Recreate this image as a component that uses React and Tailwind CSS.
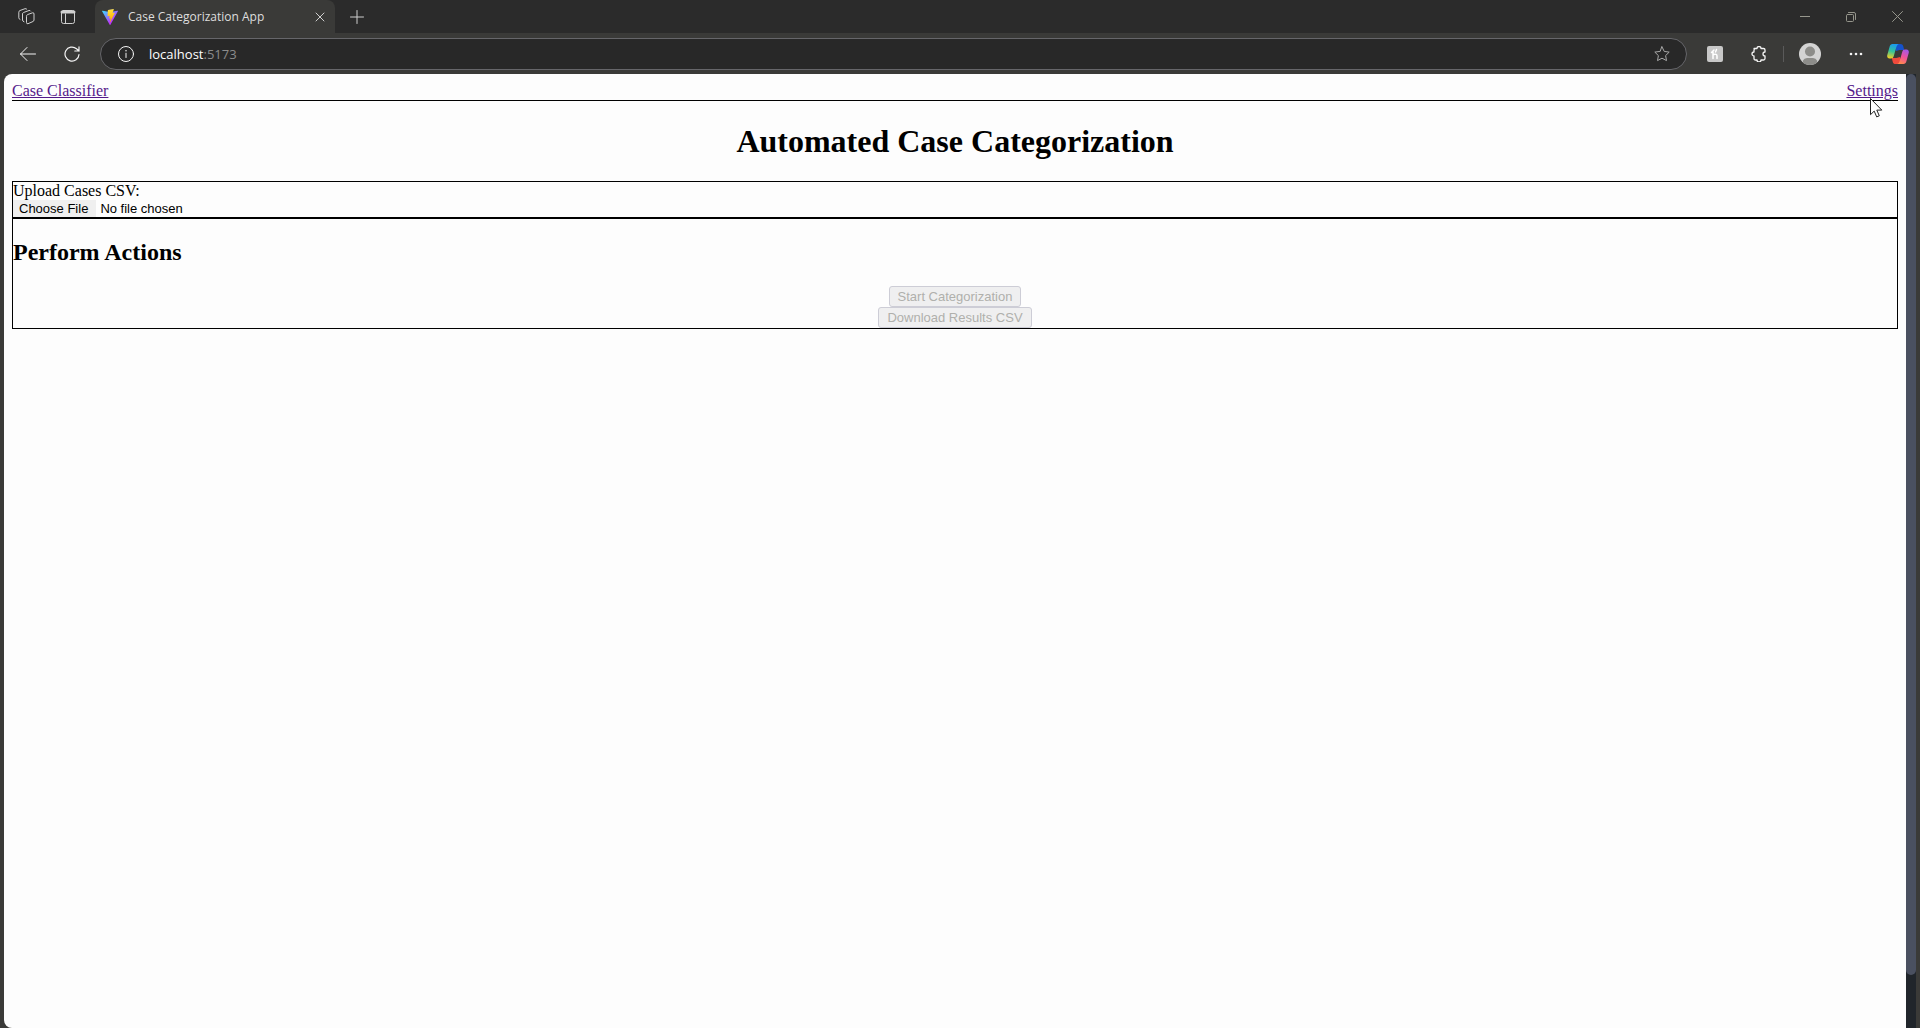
const Icon = ({ size, children, className = "", width = 1 }) => (
  <svg
    width={size}
    height={size}
    viewBox={`0 0 ${size} ${size}`}
    fill="none"
    stroke="currentColor"
    strokeWidth={width}
    strokeLinecap="round"
    strokeLinejoin="round"
    className={`block shrink-0 ${className}`}
    aria-hidden="true"
  >
    {children}
  </svg>
);

function ViteLogo() {
  return (
    <svg width="16" height="16" viewBox="0 0 256 257" className="block shrink-0" aria-hidden="true">
      <defs>
        <linearGradient id="vite-body" x1="0" x2="0.58" y1="0.1" y2="0.79">
          <stop offset="0" stopColor="#41d1ff" />
          <stop offset="1" stopColor="#bd34fe" />
        </linearGradient>
        <linearGradient id="vite-bolt" x1="0.43" x2="0.5" y1="0.02" y2="0.9">
          <stop offset="0" stopColor="#ffea83" />
          <stop offset="0.08" stopColor="#ffdd35" />
          <stop offset="1" stopColor="#ffa800" />
        </linearGradient>
      </defs>
      <path fill="url(#vite-body)" d="M255.153 37.938 134.897 252.976c-2.483 4.44-8.862 4.466-11.382.048L.875 37.958c-2.746-4.814 1.371-10.646 6.827-9.67l120.385 21.517a6.537 6.537 0 0 0 2.322-.004l117.867-21.483c5.438-.991 9.574 4.796 6.877 9.62Z" />
      <path fill="url(#vite-bolt)" d="M185.432.063 96.44 17.501a3.268 3.268 0 0 0-2.634 3.014l-5.474 92.456a3.268 3.268 0 0 0 3.997 3.378l24.777-5.718c2.318-.535 4.413 1.507 3.936 3.838l-7.361 36.047c-.495 2.426 1.782 4.5 4.151 3.78l15.304-4.649c2.372-.72 4.652 1.36 4.15 3.788l-11.698 56.621c-.732 3.542 3.979 5.473 5.943 2.437l1.313-2.028 72.516-144.72c1.215-2.423-.88-5.186-3.54-4.672l-25.505 4.922c-2.396.462-4.435-1.77-3.759-4.114l16.646-57.705c.677-2.35-1.37-4.583-3.769-4.113Z" />
    </svg>
  );
}

function CopilotLogo() {
  return (
    <svg width="22" height="20" viewBox="0 0 22 20" className="block shrink-0" aria-hidden="true">
      <defs>
        <linearGradient id="cp-left" x1="0.5" x2="0.3" y1="0" y2="1">
          <stop offset="0" stopColor="#1a9af0" />
          <stop offset="0.5" stopColor="#35c39a" />
          <stop offset="1" stopColor="#f5cf22" />
        </linearGradient>
        <linearGradient id="cp-right" x1="0.7" x2="0.3" y1="0" y2="1">
          <stop offset="0" stopColor="#a457e8" />
          <stop offset="0.5" stopColor="#f0529a" />
          <stop offset="1" stopColor="#ff8a4a" />
        </linearGradient>
      </defs>
      <path fill="#1552cc" d="M7 0h6.500c1.500 0 2.300.8 2.700 2.100L17.200 6h-4.600L9 7Z" />
      <path fill="#ef4a3c" d="M15 20H8.500c-1.500 0-2.300-.8-2.700-2.100L4.800 14h4.600L13 13Z" />
      <path fill="url(#cp-left)" d="M5.500 0h6.300C10.200.6 9.700 2 9.200 3.600L6.800 12c-.5 1.700-1.200 2.500-2.800 2.500H2.500C.6 14.500-.2 13 .3 11L2.600 2.700C3.100 1 4 0 5.500 0Z" />
      <path fill="url(#cp-right)" d="M16.500 20h-6.300c1.600-.6 2.100-2 2.600-3.600L15.200 8c.5-1.700 1.200-2.500 2.800-2.500h1.500c1.900 0 2.700 1.500 2.200 3.500l-2.300 8.300c-.5 1.700-1.400 2.700-2.900 2.700Z" />
    </svg>
  );
}

function TabStrip() {
  return (
    <div className="flex h-[33px] items-stretch bg-[#2b2b2b] text-[#cfcfcf]">
      <div className="flex w-[95px] shrink-0 items-center gap-[25px] pl-[18px]">
        <button aria-label="Workspaces">
          <Icon size={17}>
            <path d="M8.500 8Q8.500 7 9.500 6.600L14.500 4.800Q16 4.400 16 6V12Q16 13 15 13.500L10 15.700Q8.500 16.200 8.500 14.700Z" />
            <path d="M6 13.800Q4.500 13.300 4.500 12V6Q4.500 4.900 5.500 4.500L11 2.500Q12.200 2.200 12.600 3" />
            <path d="M2 11.500Q.8 11 .8 9.800V4.200Q.8 3 2 2.500L7 .7Q8.300.4 8.800 1.200" />
          </Icon>
        </button>
        <button aria-label="Tab actions">
          <Icon size={16}>
            <rect x="1.500" y="1.500" width="13" height="13" rx="2" />
            <path d="M2 3h12" strokeWidth="3" />
            <path d="M5.500 5v9" />
          </Icon>
        </button>
      </div>
      <div className="flex w-60 items-center gap-2.5 rounded-t-lg bg-[#3a3a38] pr-1.5 pl-[7px]">
        <ViteLogo />
        <span className="flex-1 truncate text-xs text-[#dedede]">Case Categorization App</span>
        <button aria-label="Close tab" className="p-1">
          <Icon size={10}>
            <path d="M1 1l8 8M9 1l-8 8" />
          </Icon>
        </button>
      </div>
      <button aria-label="New tab" className="px-[15px]">
        <Icon size={14}>
          <path d="M7 .5v13M.5 7h13" />
        </Icon>
      </button>
      <div className="ml-auto flex items-center gap-9 pr-[17px] text-[#96968c]">
        <button aria-label="Minimize">
          <Icon size={10}>
            <path d="M0 4.500h10" />
          </Icon>
        </button>
        <button aria-label="Restore">
          <Icon size={10}>
            <rect x=".5" y="2.500" width="7" height="7" rx="1" />
            <path d="M2.500.5h5.500q1.500 0 1.500 1.500v5.500" />
          </Icon>
        </button>
        <button aria-label="Close window">
          <Icon size={11}>
            <path d="M.5.5l10 10M10.500.5l-10 10" />
          </Icon>
        </button>
      </div>
    </div>
  );
}

function Toolbar() {
  return (
    <div className="flex h-[41px] items-center pr-[15px] pl-5 text-[#f4f4f4]">
      <button aria-label="Back">
        <Icon size={16}>
          <path d="M15.500 8H.5M7 1.500.5 8 7 14.500" />
        </Icon>
      </button>
      <button aria-label="Refresh" className="ml-7">
        <Icon size={16} width={1.2}>
          <path d="M15 8.500A7 7 0 1 1 12.500 2.700L15 5M15 .8V5h-4.200" />
        </Icon>
      </button>
      <div className="ml-5 flex h-8 flex-1 items-center rounded-full border border-[#66666a] bg-[#282828] pr-4 pl-[17px]">
        <Icon size={16}>
          <circle cx="8" cy="8" r="7.500" />
          <path d="M8 7.200v4.300" />
          <path d="M8 4.700v.1" strokeWidth="1.500" />
        </Icon>
        <div className="relative ml-[15px] flex-1 text-[13px] leading-5">
          <input
            aria-label="Address"
            defaultValue="localhost:5173"
            className="block w-full bg-transparent text-transparent outline-none"
          />
          <span className="pointer-events-none absolute inset-0 text-[#8c8c8c]" aria-hidden="true">
            <span className="text-white">localhost</span>:5173
          </span>
        </div>
        <button aria-label="Add to favorites" className="text-[#a8a8a8]">
          <Icon size={16}>
            <path d="M8 .8l2.200 4.600 5 .7-3.600 3.500.9 5L8 12.200l-4.500 2.400.9-5L.8 6.100l5-.7Z" />
          </Icon>
        </button>
      </div>
      <button aria-label="Shopping extension" className="ml-5 grid size-4 place-items-center rounded-xs bg-[#c8c8c8] text-white">
        <Icon size={12} width={1.5}>
          <path d="M4 3v7.500M4.500 6.500Q8 5.500 8 8v2.500M7.500 1.500 6.500 4M2.500 4.500 5 2" />
        </Icon>
      </button>
      <button aria-label="Extensions" className="ml-7">
        <Icon size={16} width={1.300}>
          <path d="M3 2.500H6A2 2 0 0 1 10 2.500H12.500Q14 2.500 14 4V6A2 2 0 0 0 14 10V12.500Q14 14 12.500 14H10A2 2 0 0 1 6 14H4.500Q3 14 3 12.500V10A2 2 0 0 1 3 6V4Q3 2.500 4.500 2.500Z" />
        </Icon>
      </button>
      <span className="ml-4 h-4 w-px bg-[#5a5a5a]" />
      <button aria-label="Profile" className="ml-[15px]">
        <svg width="22" height="22" viewBox="0 0 22 22" className="block" aria-hidden="true">
          <clipPath id="avatar">
            <circle cx="11" cy="11" r="11" />
          </clipPath>
          <g clipPath="url(#avatar)">
            <rect width="22" height="22" fill="#d4d4d4" />
            <circle cx="11" cy="8.500" r="5" fill="#8d8d8a" />
            <path d="M4 22V17.500Q5 15 8 15h6q3 0 4 2.500V22Z" fill="#8d8d8a" />
          </g>
        </svg>
      </button>
      <button aria-label="More" className="ml-7">
        <svg width="14" height="4" viewBox="0 0 14 4" fill="currentColor" className="block" aria-hidden="true">
          <circle cx="2" cy="2" r="1.300" />
          <circle cx="7" cy="2" r="1.300" />
          <circle cx="12" cy="2" r="1.300" />
        </svg>
      </button>
      <button aria-label="Copilot" className="ml-6 -mr-1">
        <CopilotLogo />
      </button>
    </div>
  );
}

const disabledButton =
  "h-[21px] rounded-[3px] border border-[#cdcdd6] bg-[#efeff0] px-2 font-['Liberation_Sans',sans-serif] text-[13px] leading-[19px] text-[#b0b0ac]";

function CasePage() {
  return (
    <div className="flex-1 overflow-hidden rounded-l-lg bg-[#fdfdfd] p-2 font-['Liberation_Serif',serif] text-base leading-[18px] text-black">
      <nav className="flex justify-between border-b border-black text-[#551a8b]">
        <a href="#home" className="underline">Case Classifier</a>
        <a href="#settings" className="relative underline">
          Settings
          <svg width="14" height="21" viewBox="0 0 14 21" className="absolute top-4 left-6" aria-hidden="true">
            <path d="M.5.5v16.200l3.700-3.600 2.500 5.800 2.600-1.100-2.500-5.700h5Z" fill="#fff" stroke="#222" />
          </svg>
        </a>
      </nav>
      <h1 className="my-[21px] text-center text-[32px] leading-[38px] font-bold">Automated Case Categorization</h1>
      <section className="border border-black">
        <label htmlFor="cases" className="block">Upload Cases CSV:</label>
        <input
          id="cases"
          type="file"
          className="block h-[17px] font-['Liberation_Sans',sans-serif] text-[13px] leading-[17px] file:mr-1 file:h-[17px] file:bg-[#efefef] file:pr-2 file:pl-1.5 file:leading-[17px]"
        />
      </section>
      <section className="border border-black">
        <h2 className="my-5 text-2xl leading-[27px] font-bold">Perform Actions</h2>
        <div className="flex flex-col items-center">
          <button disabled className={disabledButton}>Start Categorization</button>
          <button disabled className={disabledButton}>Download Results CSV</button>
        </div>
      </section>
    </div>
  );
}

export default function App() {
  return (
    <div className="flex min-h-screen flex-col bg-[#3a3a38] font-['Open_Sans',sans-serif]">
      <TabStrip />
      <Toolbar />
      <main className="flex flex-1 px-1">
        <CasePage />
        <div className="flex w-2.5 flex-col bg-[#20252b] pb-[53px]">
          <div className="flex-1 rounded-full bg-[#4a5060]" />
        </div>
      </main>
    </div>
  );
}
